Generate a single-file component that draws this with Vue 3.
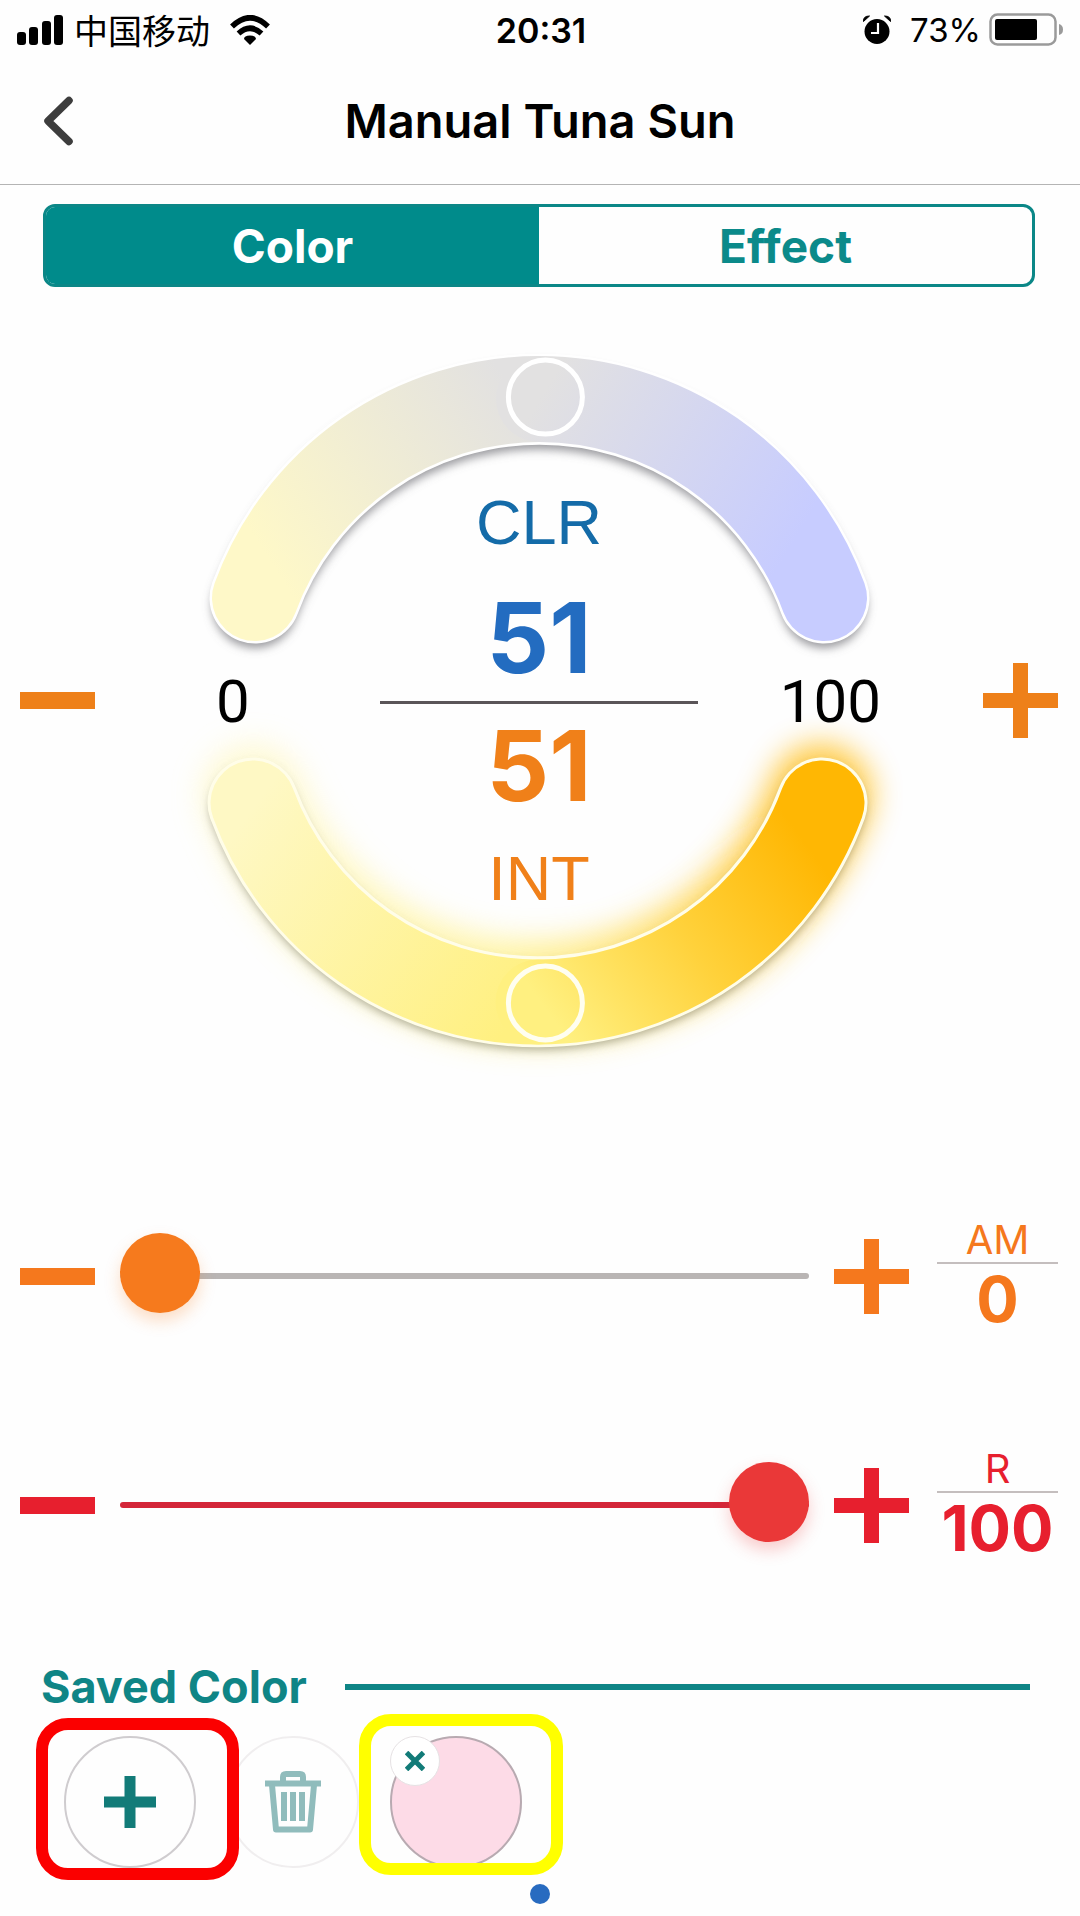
<script setup>
import { computed, ref } from 'vue'

const color = ref(51)
const intensity = ref(51)
const tab = ref('Color')
const channels = ref([
  { id: 'am', label: 'AM', value: 0 },
  { id: 'r', label: 'R', value: 100 }
])
const saved = ref(['#fddbe7'])

const clamp = (n) => Math.min(100, Math.max(0, n))

// Each dial arc spans 140 degrees on a circle of radius 303.
const offset = (value) => {
  const angle = ((value - 50) / 100) * 140 * (Math.PI / 180)
  return { x: 303 * Math.sin(angle), y: 303 * Math.cos(angle) }
}
const colorKnob = computed(() => {
  const o = offset(color.value)
  return { x: 539 + o.x, y: 700 - o.y }
})
const intensityKnob = computed(() => {
  const o = offset(intensity.value)
  return { x: 539 + o.x, y: 700 + o.y }
})
</script>

<template>
  <div class="screen">
    <div class="status">
      <div class="status-side">
        <svg class="signal" width="46" height="30" viewBox="0 0 46 30" aria-hidden="true">
          <rect x="0" y="17" width="9" height="13" rx="3" />
          <rect x="12" y="12" width="9" height="18" rx="3" />
          <rect x="25" y="6" width="9" height="24" rx="3" />
          <rect x="37" y="0" width="9" height="30" rx="3" />
        </svg>
        <span class="carrier">中国移动</span>
        <svg class="wifi" width="40" height="30" viewBox="0 0 40 30" aria-hidden="true">
          <path d="M2 11.500Q20 -6 38 11.500" fill="none" stroke="#000" stroke-width="5.500" />
          <path d="M8.500 18.500Q20 8 31.500 18.500" fill="none" stroke="#000" stroke-width="5.500" />
          <path d="M20 30L14 24Q14 20.500 20 20.500T26 24Z" />
        </svg>
      </div>
      <span class="time">20:31</span>
      <div class="status-side end">
        <svg class="alarm" width="28" height="30" viewBox="0 0 28 30" aria-hidden="true">
          <circle cx="14" cy="16.500" r="12.500" />
          <path d="M0.500 6.500Q0 1 6.500 1ZM27.500 6.500Q28 1 21.500 1Z" stroke="#000" />
          <path d="M15 8V18H8" fill="none" stroke="#fff" stroke-width="2.200" />
        </svg>
        <span class="percent">73%</span>
        <svg class="battery" width="76" height="34" viewBox="0 0 76 34" aria-hidden="true">
          <rect x="1.500" y="1.500" width="65" height="30" rx="7" fill="none" stroke="#9a9a9a" stroke-width="2.500" />
          <rect x="6" y="6" width="42" height="21" rx="2" />
          <path d="M70 11Q74 12 74 16.500T70 22Z" fill="#9a9a9a" />
        </svg>
      </div>
    </div>

    <header class="header">
      <button class="back" type="button" aria-label="Back">
        <svg width="32" height="50" viewBox="0 0 32 50" aria-hidden="true">
          <path d="M26 4.500L5 25L26 45.500" fill="none" stroke="#3d3d3d" stroke-width="7.500" stroke-linecap="round" stroke-linejoin="round" />
        </svg>
      </button>
      <h1>Manual Tuna Sun</h1>
    </header>

    <nav class="tabs">
      <button
        v-for="name in ['Color', 'Effect']"
        :key="name"
        type="button"
        :class="{ active: tab === name }"
        :aria-pressed="tab === name"
        @click="tab = name"
      >{{ name }}</button>
    </nav>

    <section class="dial-row">
      <button class="step minus dial-step" type="button" aria-label="Decrease intensity" @click="intensity = clamp(intensity - 1)"></button>
      <div class="dial">
        <svg width="760" height="760" viewBox="160 320 760 760" aria-hidden="true">
          <defs>
            <linearGradient id="clr-warm" gradientUnits="userSpaceOnUse" x1="270" y1="560" x2="520" y2="400">
              <stop offset="0" stop-color="#fef8c8" />
              <stop offset="1" stop-color="#e2e1e1" />
            </linearGradient>
            <linearGradient id="clr-cool" gradientUnits="userSpaceOnUse" x1="540" y1="400" x2="790" y2="550">
              <stop offset="0" stop-color="#e2e1e1" />
              <stop offset="1" stop-color="#c7ccff" />
            </linearGradient>
            <linearGradient id="int-low" gradientUnits="userSpaceOnUse" x1="260" y1="800" x2="530" y2="1000">
              <stop offset="0" stop-color="#fef8c4" />
              <stop offset="1" stop-color="#fff080" />
            </linearGradient>
            <linearGradient id="int-high" gradientUnits="userSpaceOnUse" x1="540" y1="1000" x2="790" y2="820">
              <stop offset="0" stop-color="#fff080" />
              <stop offset="0.500" stop-color="#ffd23c" />
              <stop offset="1" stop-color="#ffb703" />
            </linearGradient>
            <filter id="soft" filterUnits="userSpaceOnUse" x="160" y="320" width="760" height="760">
              <feGaussianBlur stdDeviation="5" />
            </filter>
            <filter id="glow" filterUnits="userSpaceOnUse" x="160" y="320" width="760" height="760">
              <feGaussianBlur stdDeviation="15" />
            </filter>
          </defs>
          <g fill="none" stroke-linecap="round">
            <path d="M256 605A303 303 0 0 1 825 605" stroke="#77777c" stroke-opacity="0.750" stroke-width="86" filter="url(#soft)" />
            <path d="M256 598A303 303 0 0 1 825 598" stroke="#fff" stroke-width="91" />
            <path d="M256 598A303 303 0 0 1 540 399" stroke="url(#clr-warm)" stroke-width="86" />
            <path d="M540 399A303 303 0 0 1 825 598" stroke="url(#clr-cool)" stroke-width="86" />
            <g filter="url(#glow)" opacity="0.750">
              <path d="M254 795A303 303 0 0 0 539 993" stroke="url(#int-low)" stroke-width="102" />
              <path d="M539 993A303 303 0 0 0 822 795" stroke="url(#int-high)" stroke-width="102" />
            </g>
            <path d="M254 808A303 303 0 0 0 823 808" stroke="#77776a" stroke-opacity="0.600" stroke-width="86" filter="url(#soft)" />
            <path d="M254 803A303 303 0 0 0 823 803" stroke="#fffde8" stroke-width="91" />
            <path d="M254 803A303 303 0 0 0 539 1002" stroke="url(#int-low)" stroke-width="85" />
            <path d="M539 1002A303 303 0 0 0 823 803" stroke="url(#int-high)" stroke-width="85" />
            <circle :cx="colorKnob.x" :cy="colorKnob.y" r="37" stroke="#fff" stroke-width="5" />
            <circle :cx="intensityKnob.x" :cy="intensityKnob.y" r="37" stroke="#fffef0" stroke-width="5" />
          </g>
        </svg>
        <div class="readout">
          <span class="name clr">CLR</span>
          <strong class="clr-value">{{ color }}</strong>
          <div class="scale">
            <span class="low">0</span>
            <span class="rule"></span>
            <span class="high">100</span>
          </div>
          <strong class="int">{{ intensity }}</strong>
          <span class="name int">INT</span>
        </div>
      </div>
      <button class="step plus dial-step" type="button" aria-label="Increase intensity" @click="intensity = clamp(intensity + 1)"></button>
    </section>

    <section class="channels">
      <div v-for="channel in channels" :key="channel.id" class="channel" :class="channel.id">
        <button class="step minus" type="button" :aria-label="`Decrease ${channel.label}`" @click="channel.value = clamp(channel.value - 1)"></button>
        <input
          :id="`range-${channel.id}`"
          v-model.number="channel.value"
          type="range"
          min="0"
          max="100"
          :style="{ '--fill': channel.value + '%' }"
        />
        <button class="step plus" type="button" :aria-label="`Increase ${channel.label}`" @click="channel.value = clamp(channel.value + 1)"></button>
        <div class="value">
          <label :for="`range-${channel.id}`">{{ channel.label }}</label>
          <output :for="`range-${channel.id}`">{{ channel.value }}</output>
        </div>
      </div>
    </section>

    <section class="saved">
      <h2>Saved Color</h2>
      <div class="swatches">
        <div class="cell ring-red">
          <button class="circle add" type="button" aria-label="Save color">
            <svg width="52" height="52" viewBox="0 0 52 52" aria-hidden="true">
              <path d="M26 0V52M0 26H52" stroke="#127b78" stroke-width="11" />
            </svg>
          </button>
        </div>
        <div class="cell">
          <button class="circle trash" type="button" aria-label="Delete saved color">
            <svg width="58" height="62" viewBox="0 0 58 62" fill="none" stroke="#90bcbc" aria-hidden="true">
              <path d="M1 12.500H57" stroke-width="6" />
              <path d="M19 11V6Q19 3 22 3H36Q39 3 39 6V11" stroke-width="6" />
              <path d="M8 14L12 58.500H46L50 14" stroke-width="6" stroke-linejoin="round" />
              <path d="M20 21V50M29 21V50M38 21V50" stroke-width="6" />
            </svg>
          </button>
        </div>
        <div v-for="(swatch, i) in saved" :key="i" class="cell ring-yellow">
          <button class="circle swatch" type="button" :aria-label="`Saved color ${i + 1}`" :style="{ backgroundColor: swatch }"></button>
          <button class="remove" type="button" :aria-label="`Remove saved color ${i + 1}`" @click="saved.splice(i, 1)">
            <svg width="20" height="20" viewBox="0 0 20 20" aria-hidden="true">
              <path d="M1.500 1.500L18.500 18.500M18.500 1.500L1.500 18.500" stroke="#127b78" stroke-width="5" />
            </svg>
          </button>
        </div>
      </div>
      <span class="page-dot"></span>
    </section>
  </div>
</template>

<style>
body {
  margin: 0;
  background: #fefefe;
}
</style>

<style scoped>
.screen {
  box-sizing: border-box;
  min-height: 100vh;
  background: #fefefe;
  color: #000;
  font-family: Inter, "Noto Sans CJK SC", sans-serif;
}

button {
  padding: 0;
  border: 0;
  background: none;
  font: inherit;
  cursor: pointer;
}

svg {
  display: block;
}

.status {
  display: grid;
  grid-template-columns: 1fr auto 1fr;
  align-items: center;
  height: 60px;
  padding: 0 15px 0 17px;
}

.status-side {
  display: flex;
  align-items: center;
}

.end {
  justify-content: flex-end;
}

.carrier {
  margin: 0 20px 0 11px;
  font-family: "Noto Sans CJK SC", sans-serif;
  font-size: 34px;
  line-height: 58px;
}

.time {
  font-size: 34px;
  font-weight: 600;
}

.percent {
  margin: 0 8px 0 19px;
  font-size: 33px;
}

.header {
  box-sizing: border-box;
  display: grid;
  grid-template-columns: 1fr auto 1fr;
  align-items: center;
  height: 125px;
  padding: 0 43px 2px;
  border-bottom: 1px solid #b4b4b4;
}

.back {
  justify-self: start;
}

h1 {
  margin: 0;
  font-size: 47px;
  font-weight: 600;
  line-height: 60px;
}

.tabs {
  display: flex;
  overflow: hidden;
  height: 77px;
  margin: 19px 45px 0 43px;
  border: 3px solid #0b8787;
  border-radius: 12px;
}

.tabs button {
  flex: 1;
  color: #0b8a8a;
  font-size: 46px;
  font-weight: 700;
}

.tabs .active {
  background: #008b8b;
  color: #fff;
}

.dial-row {
  display: flex;
  align-items: center;
  justify-content: space-between;
  margin-top: 33px;
  padding: 0 22px 0 20px;
}

.dial {
  display: grid;
  width: 760px;
}

.dial > * {
  grid-area: 1 / 1;
}

.readout {
  display: flex;
  flex-direction: column;
  align-items: center;
  justify-content: center;
}

.readout strong {
  font-size: 98px;
  font-weight: 700;
  line-height: 68px;
}

.name {
  font-family: "Liberation Sans", Arial, sans-serif;
  font-size: 63px;
  line-height: 60px;
}

.name.clr {
  margin-bottom: 52px;
  color: #146ba8;
}

.name.int {
  margin-top: 48px;
}

.readout .int {
  color: #f08019;
}

.clr-value {
  color: #236cc0;
}

.scale {
  display: grid;
  grid-template-columns: 1fr 318px 1fr;
  align-items: center;
  width: 100%;
  font-family: Roboto, sans-serif;
  font-size: 60px;
  line-height: 60px;
}

.low {
  padding-left: 57px;
}

.rule {
  height: 3px;
  background: #5a5558;
}

.high {
  padding-right: 38px;
  text-align: right;
}

.step {
  position: relative;
  flex: none;
  width: 75px;
  height: 75px;
  color: #f5781d;
}

.dial-step {
  color: #ee8019;
}

.step::before,
.step.plus::after {
  content: "";
  position: absolute;
  inset: 30px 0;
  background: currentColor;
}

.step.minus::before {
  inset: 29px 0;
}

.step.plus::after {
  inset: 0 30px;
}

.channels {
  display: flex;
  flex-direction: column;
  gap: 113px;
  margin-top: 138px;
}

.channel {
  --thumb: #f67a1d;
  --shadow: #f67a1d40;
  --track: #f67a1d;
  display: flex;
  align-items: center;
  padding: 0 22px 0 20px;
  color: #f5781d;
}

.channel.r {
  --thumb: #ea3838;
  --shadow: #ea383840;
  --track: #d42639;
  color: #e71f2e;
}

.channel .step {
  color: inherit;
}

input[type="range"] {
  flex: 1;
  min-width: 0;
  height: 80px;
  margin: 0 25px;
  appearance: none;
  background: none;
}

input[type="range"]::-webkit-slider-runnable-track {
  height: 6px;
  border-radius: 3px;
  background: linear-gradient(to right, var(--track) var(--fill), #b9b5b4 var(--fill));
}

input[type="range"]::-webkit-slider-thumb {
  width: 80px;
  height: 80px;
  margin-top: -40px;
  appearance: none;
  border-radius: 50%;
  background: var(--thumb);
  box-shadow: 0 8px 16px var(--shadow);
}

.value {
  display: flex;
  flex-direction: column;
  width: 121px;
  margin-left: 28px;
  text-align: center;
}

.value label {
  border-bottom: 2px solid #c4bebe;
  font-size: 40px;
  line-height: 44px;
}

.value output {
  font-size: 63px;
  font-weight: 700;
  line-height: 70px;
}

.saved {
  display: flex;
  flex-direction: column;
  margin-top: 96px;
  padding-bottom: 12px;
}

h2 {
  display: flex;
  align-items: center;
  gap: 38px;
  margin: 0 50px 0 41px;
  color: #0f8586;
  font-size: 45px;
  font-weight: 700;
  line-height: 56px;
}

h2::after {
  content: "";
  flex: 1;
  height: 6px;
  background: #0f8586;
}

.swatches {
  display: flex;
  gap: 31px;
  margin: 21px 64px 0;
}

.cell {
  position: relative;
  width: 132px;
  height: 132px;
}

.circle {
  display: flex;
  align-items: center;
  justify-content: center;
  box-sizing: border-box;
  width: 100%;
  height: 100%;
  border: 2px solid #cfcccf;
  border-radius: 50%;
}

.trash {
  border-color: #f0eeef;
}

.swatch {
  border-color: #b8aab1;
}

.ring-red::after,
.ring-yellow::after {
  content: "";
  position: absolute;
  z-index: 1;
  border: 12px solid #fb0000;
  border-radius: 32px;
  pointer-events: none;
}

.ring-red::after {
  inset: -18px -43px -12px -28px;
}

.ring-yellow::after {
  inset: -22px -41px -7px -31px;
  border-color: #ffff00;
}

.remove {
  position: absolute;
  top: 0;
  left: 0;
  display: flex;
  align-items: center;
  justify-content: center;
  box-sizing: border-box;
  width: 50px;
  height: 50px;
  border: 1px solid #e6e2e4;
  border-radius: 50%;
  background: #fff;
}

.page-dot {
  align-self: center;
  width: 20px;
  height: 20px;
  margin-top: 16px;
  border-radius: 50%;
  background: #286bc0;
}
</style>
